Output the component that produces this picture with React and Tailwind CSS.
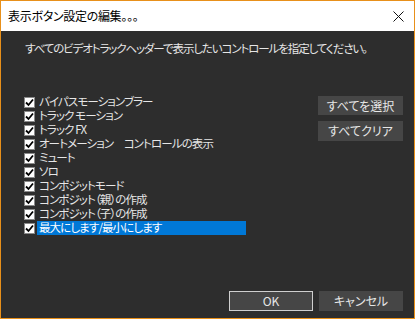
const items = [
  "バイパスモーションブラー",
  "トラック モーション",
  "トラック FX",
  "オートメーション　コントロールの表示",
  "ミュート",
  "ソロ",
  "コンポジットモード",
  "コンポジット（親）の作成",
  "コンポジット（子）の作成",
  "最大にします/最小にします",
];

function Check() {
  return (
    <span className="w-[11px] h-[11px] bg-white border border-[#8a8a8a] flex items-center justify-center shrink-0">
      <svg width="9" height="9" viewBox="0 0 9 9">
        <path d="M1 4.5 L3.5 7 L8 1.5" stroke="#000" strokeWidth="1.8" fill="none" />
      </svg>
    </span>
  );
}

export default function App() {
  return (
    <div
      className="w-[415px] h-[319px] flex flex-col border border-[#e8901a] text-[12px] leading-none [font-feature-settings:'palt'] overflow-hidden"
      style={{ fontFamily: '"Noto Sans CJK JP", "Noto Sans", sans-serif' }}
    >
      {/* タイトルバー */}
      <div className="h-[30px] bg-white flex items-center justify-between pl-[7px] pr-[10px] shrink-0">
        <span className="text-black text-[12px] tracking-[-0.3px]">表示ボタン設定の編集。。。</span>
        <svg width="11" height="11" viewBox="0 0 11 11">
          <path d="M0.5 0.5 L10.5 10.5 M10.5 0.5 L0.5 10.5" stroke="#111" strokeWidth="1" />
        </svg>
      </div>

      <div className="flex-1 bg-[#2d2d2d] text-[#e6e6e6] flex flex-col">
        <p className="pl-[24px] pt-[11px] text-[11.5px] leading-[12px] whitespace-nowrap tracking-[-1.1px]">
          すべてのビデオトラックヘッダーで表示したいコントロールを指定してください。
        </p>

        <div className="flex justify-between pl-[23px] pr-[11px] mt-[41px]">
          <div className="flex flex-col">
            {items.map((t, i) => (
              <div key={i} className="h-[14px] flex items-center gap-[2px]">
                <Check />
                <span
                  className={
                    "h-[14px] flex items-center pl-[2px] text-[11.5px] whitespace-nowrap tracking-[-0.9px] " +
                    (i === items.length - 1 ? "bg-[#0078d7] text-white w-[209px]" : "")
                  }
                >
                  {t}
                </span>
              </div>
            ))}
          </div>
          <div className="flex flex-col gap-[6px] mt-[1px]">
            <button className="w-[85px] h-[19px] bg-[#464646] text-[#e6e6e6] text-[12px] flex items-center justify-center">
              すべてを選択
            </button>
            <button className="w-[85px] h-[20px] bg-[#464646] text-[#e6e6e6] text-[12px] flex items-center justify-center">
              すべてクリア
            </button>
          </div>
        </div>

        <div className="mt-auto mb-[7px] flex justify-end gap-[6px] pr-[11px]">
          <button className="w-[84px] h-[20px] bg-[#464646] border border-[#cfcfcf] text-[#e6e6e6] text-[12px] flex items-center justify-center">
            OK
          </button>
          <button className="w-[84px] h-[20px] bg-[#464646] text-[#e6e6e6] text-[12px] flex items-center justify-center">
            キャンセル
          </button>
        </div>
      </div>
    </div>
  );
}
